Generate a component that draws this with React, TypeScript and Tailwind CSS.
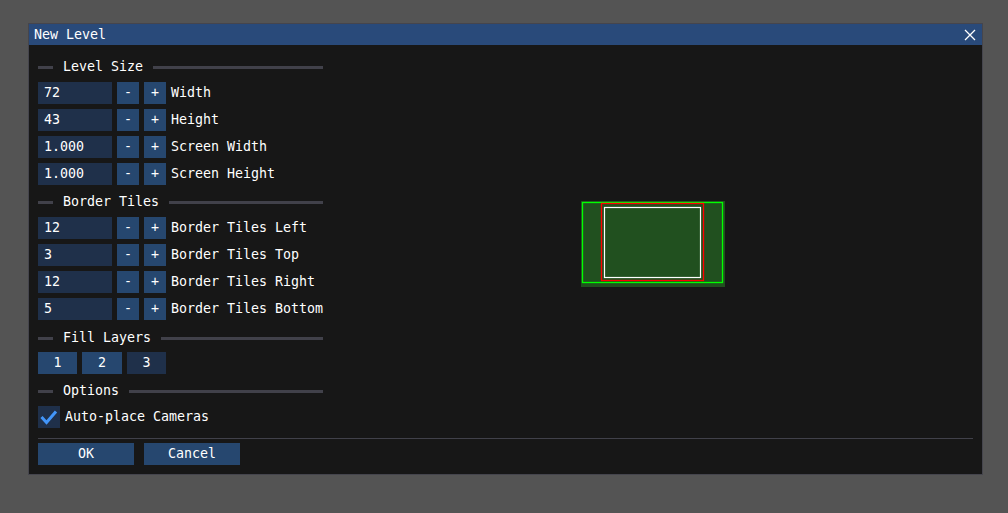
const FONT = "font-['DejaVu_Sans_Mono','Liberation_Mono',monospace]";

function SeparatorText({ label }: { label: string }) {
  return (
    <div className="flex h-[22px] items-center">
      <div className="h-[3px] w-[15px] bg-[#41414a]" />
      <span className="ml-[10px] whitespace-pre text-white">{label}</span>
      <div className="ml-[10px] h-[3px] flex-1 bg-[#41414a]" />
    </div>
  );
}

function StepperRow({ value, label }: { value: string; label: string }) {
  return (
    <div className="flex h-[22px] items-center">
      <div className="flex h-full w-[74px] items-center bg-[#1f304a] pl-[6px] text-white">{value}</div>
      <button className="ml-[5px] flex h-full w-[22px] items-center justify-center bg-[#26476f] text-white">-</button>
      <button className="ml-[5px] flex h-full w-[22px] items-center justify-center bg-[#26476f] text-white">+</button>
      <span className="ml-[5px] whitespace-pre text-white">{label}</span>
    </div>
  );
}

const SIZE_ROWS = [
  { value: "72", label: "Width" },
  { value: "43", label: "Height" },
  { value: "1.000", label: "Screen Width" },
  { value: "1.000", label: "Screen Height" },
];

const BORDER_ROWS = [
  { value: "12", label: "Border Tiles Left" },
  { value: "3", label: "Border Tiles Top" },
  { value: "12", label: "Border Tiles Right" },
  { value: "5", label: "Border Tiles Bottom" },
];

function Preview() {
  return (
    <svg width="145" height="87" viewBox="0 0 145 87" className="block">
      <rect x="0" y="0" width="144" height="86" fill="#21501f" />
      <rect x="1.5" y="1.5" width="140" height="80" fill="none" stroke="#00ff00" strokeWidth="1.3" />
      <rect x="20.5" y="2.5" width="102" height="77" fill="none" stroke="#ff0000" strokeWidth="1.3" />
      <rect x="23.5" y="6.5" width="96" height="70" fill="none" stroke="#ffffff" strokeWidth="1.2" />
    </svg>
  );
}

export default function App() {
  return (
    <div className={`h-[513px] w-[1008px] bg-[#545454] pl-[28px] pt-[23px] text-[13.3px] leading-none ${FONT}`}>
      <div className="flex h-[452px] w-[955px] flex-col border border-[#45454d] bg-[#171717]">
        {/* Title bar */}
        <div className="flex h-[21px] items-center justify-between bg-[#294a7a] pl-[5px] pr-[6px]">
          <span className="text-white">New Level</span>
          <svg width="12" height="12" viewBox="0 0 12 12">
            <path d="M1 1 L11 11 M11 1 L1 11" stroke="#ffffff" strokeWidth="1.3" />
          </svg>
        </div>

        <div className="flex flex-col px-[9px] pt-[11px]">
          <div className="flex">
            {/* Left column */}
            <div className="flex w-[285px] flex-col">
              <SeparatorText label="Level Size" />
              <div className="mt-[4px] flex flex-col gap-[5px]">
                {SIZE_ROWS.map((r) => (
                  <StepperRow key={r.label} value={r.value} label={r.label} />
                ))}
              </div>

              <div className="mt-[6px]">
                <SeparatorText label="Border Tiles" />
              </div>
              <div className="mt-[4px] flex flex-col gap-[5px]">
                {BORDER_ROWS.map((r) => (
                  <StepperRow key={r.label} value={r.value} label={r.label} />
                ))}
              </div>

              <div className="mt-[7px]">
                <SeparatorText label="Fill Layers" />
              </div>
              <div className="mt-[3px] flex h-[22px] gap-[5px] text-white">
                <button className="flex w-[39px] items-center justify-center bg-[#26476f]">1</button>
                <button className="flex w-[40px] items-center justify-center bg-[#26476f]">2</button>
                <button className="flex w-[39px] items-center justify-center bg-[#1f304a]">3</button>
              </div>

              <div className="mt-[6px]">
                <SeparatorText label="Options" />
              </div>
              <div className="mt-[4px] flex h-[22px] items-center">
                <div className="flex h-[22px] w-[22px] items-center justify-center bg-[#1f304a]">
                  <svg width="22" height="22" viewBox="0 0 22 22">
                    <path d="M3.5 11 L8.5 16.5 L18 5.5" fill="none" stroke="#4296fa" strokeWidth="3" />
                  </svg>
                </div>
                <span className="ml-[5px] whitespace-pre text-white">Auto-place Cameras</span>
              </div>
            </div>

            {/* Level preview */}
            <div className="ml-[258px] mt-[145px]">
              <Preview />
            </div>
          </div>

          <div className="mt-[10px] h-px bg-[#41414a]" />

          <div className="mt-[4px] flex gap-[10px] text-white">
            <button className="flex h-[22px] w-[96px] items-center justify-center bg-[#26476f]">OK</button>
            <button className="flex h-[22px] w-[96px] items-center justify-center bg-[#26476f]">Cancel</button>
          </div>
        </div>
      </div>
    </div>
  );
}
